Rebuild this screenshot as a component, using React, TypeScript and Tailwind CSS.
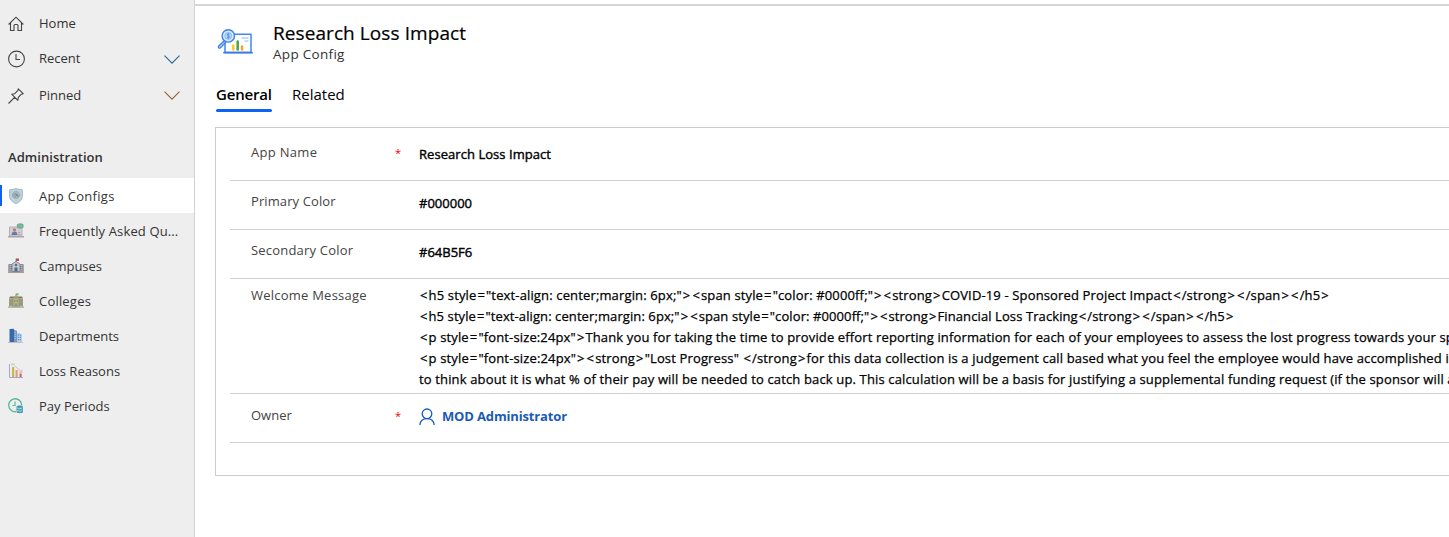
import React from "react";

function Chevron({ c }: { c: string }) {
  return (
    <svg width="16" height="9" viewBox="0 0 16 9" className={c} fill="none" stroke="currentColor" strokeWidth="1.1">
      <path d="M.5.7 8 8.200 15.500.7" />
    </svg>
  );
}

function HomeIcon() {
  return (
    <svg width="16" height="16" viewBox="0 0 16 16" fill="none" stroke="#444" strokeWidth="1.1">
      <path d="M.6 8.500 8 1.200 15.400 8.500M2.500 6.800V14.500H6V9.500Q6 8.500 7 8.500H9Q10 8.500 10 9.500V14.500H13.500V6.800" />
    </svg>
  );
}
function ClockIcon() {
  return (
    <svg width="18" height="18" viewBox="0 0 18 18" fill="none" stroke="#444" strokeWidth="1.1" className="-ml-px">
      <circle cx="9.500" cy="9" r="7.900" />
      <path d="M9 4V9.500H13" />
    </svg>
  );
}
function PinIcon() {
  return (
    <svg width="16" height="16" viewBox="0 0 16 16" fill="none" stroke="#444" strokeWidth="1.1" strokeLinejoin="round">
      <path d="M10.300.8 15.200 5.700 13.400 6.200 10.300 9.300 9.800 12.300 3.700 6.200 6.700 5.700 9.800 2.600ZM6.600 9.300.5 15.500" />
    </svg>
  );
}

function ShieldIcon() {
  return (
    <svg width="16" height="16" viewBox="0 0 16 16">
      <path d="M8 .4C6 1.600 3.500 1.500 1.700 1.800V8.500C1.700 12 4.500 14 8 15.500 11.500 14 14.300 12 14.300 8.500V1.800C12.500 1.500 10 1.600 8 .4Z" fill="#c3d0d5" stroke="#8fbccb" />
      <circle cx="8" cy="7" r="3.600" fill="#a9b8c0" stroke="#8fa3ad" strokeDasharray="1.500 .8" />
      <path d="M5.500 7.500 8 5.500 10.500 9M7 9.500 9.500 6" stroke="#738c9a" fill="none" />
    </svg>
  );
}
function FaqIcon() {
  return (
    <svg width="16" height="16" viewBox="0 0 16 16">
      <path d="M1.500 4H14V13H1.500Z" fill="#d5cdd2" stroke="#aaa5b0" strokeWidth=".8" />
      <path d="M0 13H16V14.500H0Z" fill="#aaa6ad" />
      <circle cx="6.500" cy="6.800" r="1.600" fill="#b27b78" />
      <path d="M3.600 12C3.600 9.200 5 8.500 6.500 8.500S9.400 9.200 9.400 12Z" fill="#627cae" />
      <path d="M10 9.500H12.500M10 11.500H12.500" stroke="#b9a9b0" />
      <ellipse cx="12.200" cy="3" rx="3.500" ry="2.800" fill="#6eae91" />
      <path d="M10.500 3H14" stroke="#a2ccb7" strokeDasharray=".8 .5" />
    </svg>
  );
}
function CampusIcon() {
  return (
    <svg width="16" height="16" viewBox="0 0 16 16">
      <path d="M8 5V.8" stroke="#777" strokeWidth=".8" />
      <path d="M8 .5H11V3H8Z" fill="#b44e5c" />
      <path d="M0.800 6.500H4.500V13H.8ZM11.500 6.500H15.200V13H11.500Z" fill="#b3b7bf" stroke="#777d87" strokeWidth=".8" />
      <path d="M4 6 8 3.500 12 6V13.500H4Z" fill="#c7c8ca" stroke="#777d87" strokeWidth=".8" />
      <path d="M2 8V12M3.500 8V12M12.500 8V12M14 8V12" stroke="#626b78" strokeWidth=".8" strokeDasharray="1.300 .8" />
      <circle cx="8" cy="7" r="1.300" fill="#50739a" />
      <path d="M6.500 9.500H9.500V13.500H6.500Z" fill="#426f9d" />
      <path d="M0 13.500H16V14.700H0Z" fill="#927564" />
    </svg>
  );
}
function CollegeIcon() {
  return (
    <svg width="16" height="16" viewBox="0 0 16 16">
      <path d="M8 5V.8" stroke="#777" strokeWidth=".7" />
      <path d="M8 .4H10.500V2.300H8Z" fill="#62b38e" />
      <path d="M1 5.500 2 3.500H14L15 5.500Z" fill="#807a73" />
      <path d="M1 5.500H15V13.500H1Z" fill="#ad9c70" />
      <path d="M5 5.500 8 2.500 11 5.500V13.500H5Z" fill="#cfad65" stroke="#8b8c76" strokeWidth=".6" />
      <path d="M2 7H4V8.700H2ZM2 10H4V12H2ZM12 7H14V8.700H12ZM12 10H14V12H12ZM6 7H7.500V9H6ZM8.500 7H10V9H8.500ZM6.800 10.500H9.200V13.500H6.800Z" fill="#62a9ad" />
      <circle cx="8" cy="5" r="1" fill="#6fa9a8" />
      <path d="M0 13.500H16V14.800H0Z" fill="#aaa9a5" />
    </svg>
  );
}
function DepartmentsIcon() {
  return (
    <svg width="16" height="16" viewBox="0 0 16 16">
      <path d="M1.500 1 6 .8V14H1.500Z" fill="#386aa8" />
      <path d="M6 2 9 2.800V14H6Z" fill="#7898bd" />
      <path d="M9 4.500 14 6V14H9Z" fill="#b8cfeb" />
      <path d="M10.300 6.500V13M12.300 6.500V13" stroke="#438de0" strokeWidth="1.100" strokeDasharray="1.300 .9" />
      <path d="M7.200 4V12" stroke="#cfdaea" strokeWidth=".8" strokeDasharray="1 1" />
      <path d="M0 14H15V14.700H0Z" fill="#a9adb5" />
    </svg>
  );
}
function LossIcon() {
  return (
    <svg width="16" height="16" viewBox="0 0 16 16">
      <path d="M1.500 1V14.500H15" fill="none" stroke="#a9a6c8" />
      <path d="M3 1.500C3 .4 4 .6 4.500.3S7 .3 7 1.500V2.200H3Z" fill="#cdd2d7" />
      <path d="M4 4H6.200V14H4Z" fill="#cdb44d" />
      <path d="M7.500 7H9.700V14H7.500Z" fill="#dba07a" />
      <path d="M11.500 10.500H13.700V14H11.500Z" fill="#d66473" />
      <path d="M7 3 13.500 9M13.800 6.500V9.300H11" fill="none" stroke="#dfa4ad" strokeWidth=".8" />
    </svg>
  );
}
function PayIcon() {
  return (
    <svg width="16" height="16" viewBox="0 0 16 16" fill="none">
      <path d="M8 13.700A6.500 6.500 0 1 1 13.700 7.200" stroke="#58b99b" strokeWidth="1.300" />
      <path d="M7 3.500V7.500H4.500" stroke="#65b8a2" strokeWidth="1.200" />
      <path d="M8.500 8.800C8.500 7.200 15 7.200 15 8.800V14C15 15.600 8.500 15.600 8.500 14Z" fill="#459db4" />
      <path d="M9 9.800C10 10.800 13.500 10.800 14.500 9.800M9 12.300C10 13.300 13.500 13.300 14.500 12.300" stroke="#bfe0e7" strokeWidth=".9" />
    </svg>
  );
}

function ReportIcon() {
  return (
    <svg width="36" height="28" viewBox="0 0 36 28" fill="none">
      <path d="M16 6.200H34V24.500H8V15" stroke="#4285ee" strokeWidth="1.500" strokeLinejoin="round" />
      <path d="M7 24.700H35" stroke="#3c78e7" strokeWidth="1.800" strokeLinecap="round" />
      <path d="M7.500 12.500 1.500 18.200C.8 19.800 2.200 20.700 3.500 19.800L9 14" fill="#a8d0fa" stroke="#3f7fe8" strokeWidth="1.200" />
      <circle cx="11.300" cy="7.900" r="6.200" fill="#d5eafd" stroke="#3f7fe8" strokeWidth="1.400" />
      <circle cx="11.300" cy="7.900" r="3.500" fill="#b3d7fb" stroke="#79afef" strokeWidth=".7" />
      <path d="M12.600 6.400C11.600 5.400 10.100 6 10.300 7.100 10.600 8.200 12.600 7.700 12.600 8.900 12.600 10 10.800 10.200 9.900 9.200M11.300 5V10.900" stroke="#4380d8" strokeWidth=".7" />
      <path d="M16.300 17.500V21.500" stroke="#f6cb30" strokeWidth="2.500" strokeLinecap="round" />
      <path d="M20.700 13.500V21.500" stroke="#53a44a" strokeWidth="2.600" strokeLinecap="round" />
      <path d="M25 18.500V21.500" stroke="#f2a13a" strokeWidth="2.500" strokeLinecap="round" />
      <path d="M24.500 10H31.500M27.500 13H31.500" stroke="#82bcf5" strokeWidth="1.200" />
    </svg>
  );
}

function PersonIcon() {
  return (
    <svg width="16" height="18" viewBox="0 0 16 18" fill="none" stroke="#1b5bb5" strokeWidth="1.300">
      <circle cx="8" cy="5.800" r="4.800" />
      <path d="M.8 17C1.200 13.200 3.600 10.600 8 10.600S14.800 13.200 15.200 17" />
    </svg>
  );
}

const items = [
  { label: "App Configs", icon: <ShieldIcon />, ls: "tracking-[0.3px]", active: true },
  { label: "Frequently Asked Qu...", icon: <FaqIcon />, ls: "tracking-[0.13px]" },
  { label: "Campuses", icon: <CampusIcon />, ls: "" },
  { label: "Colleges", icon: <CollegeIcon />, ls: "tracking-[0.2px]" },
  { label: "Departments", icon: <DepartmentsIcon />, ls: "" },
  { label: "Loss Reasons", icon: <LossIcon />, ls: "" },
  { label: "Pay Periods", icon: <PayIcon />, ls: "" },
];

const lines = [
  { ls: "tracking-[0.145px]", text: `<h5 style="text-align: center;margin: 6px;"><span style="color: #0000ff;"><strong>COVID-19 - Sponsored Project Impact</strong></span></h5>` },
  { ls: "tracking-[0.095px]", text: `<h5 style="text-align: center;margin: 6px;"><span style="color: #0000ff;"><strong>Financial Loss Tracking</strong></span></h5>` },
  { ls: "tracking-[0.139px]", text: `<p style="font-size:24px">Thank you for taking the time to provide effort reporting information for each of your employees to assess the lost progress towards your sp` },
  { ls: "tracking-[0.145px]", text: `<p style="font-size:24px"><strong>"Lost Progress" </strong>for this data collection is a judgement call based what you feel the employee would have accomplished i` },
  { ls: "tracking-[0.145px]", text: `to think about it is what % of their pay will be needed to catch back up. This calculation will be a basis for justifying a supplemental funding request (if the sponsor will a` },
];

/* Angle brackets and equals signs get a little air on both sides. */
function CodeLine({ text, ls }: { text: string; ls: string }) {
  return (
    <div className={"whitespace-pre " + ls}>
      {text.split(/([<>=])/).map((part, i) =>
        i % 2 ? <span key={i} className="px-px">{part}</span> : part
      )}
    </div>
  );
}

function Row({ label, ls, required, h, lh, children }: { label: string; ls: string; required?: boolean; h: string; lh: string; children: React.ReactNode }) {
  return (
    <div className={"ml-[14px] flex border-b border-[#d2d2d2] " + h}>
      <div className={"flex w-[189px] shrink-0 items-center pl-[21px] text-[#444] " + lh}>
        <span className={ls}>{label}</span>
        {required && <span className="ml-auto mr-[18px] text-[11px] text-[#e00]">*</span>}
      </div>
      {children}
    </div>
  );
}

export default function App() {
  return (
    <div className="flex h-[537px] w-full overflow-hidden bg-white font-['Open_Sans',sans-serif] text-[13px] text-[#333]">
      <aside className="flex w-[195px] shrink-0 flex-col border-r border-[#d2d2d2] bg-[#eee]">
        <div className="mt-[6px] flex h-[35px] items-center pl-2"><div className="w-[31px]"><HomeIcon /></div>Home</div>
        <div className="flex h-[36px] items-center pl-2"><div className="w-[31px]"><ClockIcon /></div>Recent<Chevron c="ml-auto mr-[14px] text-[#2c6396]" /></div>
        <div className="flex h-[37px] items-center pl-2"><div className="w-[31px]"><PinIcon /></div>Pinned<Chevron c="ml-auto mr-[14px] text-[#95602e]" /></div>
        <div className="mt-[24px] flex h-[40px] items-center pl-2 font-semibold tracking-[0.05px]">Administration</div>
        {items.map((i) => (
          <div key={i.label} className={i.active ? "flex h-[35px] items-center bg-white" : "flex h-[35px] items-center"}>
            <div className={i.active ? "h-[21px] w-[2px] bg-[#0b62f5]" : "w-[2px]"} />
            <div className="ml-[6px] w-[31px]">{i.icon}</div>
            <span className={"pt-[2px] " + i.ls}>{i.label}</span>
          </div>
        ))}
      </aside>
      <main className="flex min-w-0 flex-1 flex-col pt-1">
        <div className="h-[2px] shrink-0 bg-[#d6d6d6]" />
        <div className="flex pl-[22px] pt-[15px]">
          <div className="w-[56px] pt-[7px]"><ReportIcon /></div>
          <div className="flex flex-col text-black">
            <span className="text-[19px] leading-6 tracking-[0.08px] [-webkit-text-stroke:0.2px]">Research Loss Impact</span>
            <span className="text-[13.5px] leading-[18px] tracking-[0.3px] text-[#333]">App Config</span>
          </div>
        </div>
        <div className="ml-[21px] mt-5 flex gap-5 text-[15px] leading-[22px] text-black">
          <span className="flex h-[29px] w-14 flex-col font-semibold tracking-[-0.2px]">
            General
            <span className="mt-auto h-[3px] rounded-full bg-[#0b62f5]" />
          </span>
          <span>Related</span>
        </div>
        <div className="ml-5 mt-[15px] flex h-[349px] shrink-0 flex-col border border-r-0 border-[#ccc]">
          <Row label="App Name" ls="tracking-[0.3px]" required h="h-[53px]" lh="h-[50px]">
            <span className="pt-[17px] tracking-[0.05px] text-black [-webkit-text-stroke:0.4px]">Research Loss Impact</span>
          </Row>
          <Row label="Primary Color" ls="tracking-[0.1px]" h="h-[49px]" lh="h-[42px]">
            <span className="pt-[13px] text-black [-webkit-text-stroke:0.4px]">#000000</span>
          </Row>
          <Row label="Secondary Color" ls="tracking-[0.2px]" h="h-[49px]" lh="h-[42px]">
            <span className="pt-[13px] text-black [-webkit-text-stroke:0.4px]">#64B5F6</span>
          </Row>
          <Row label="Welcome Message" ls="tracking-[0.23px]" h="h-[115px]" lh="h-[34px]">
            <div className="flex flex-col pt-[6px] leading-[21px] text-black [-webkit-text-stroke:0.25px]">
              {lines.map((l) => <CodeLine key={l.text} text={l.text} ls={l.ls} />)}
            </div>
          </Row>
          <Row label="Owner" ls="" required h="h-[49px]" lh="h-[44px]">
            <div className="flex h-[46px] items-center gap-[7px] font-bold tracking-[-0.15px] text-[#1b5bb5]">
              <PersonIcon />
              MOD Administrator
            </div>
          </Row>
        </div>
      </main>
    </div>
  );
}
